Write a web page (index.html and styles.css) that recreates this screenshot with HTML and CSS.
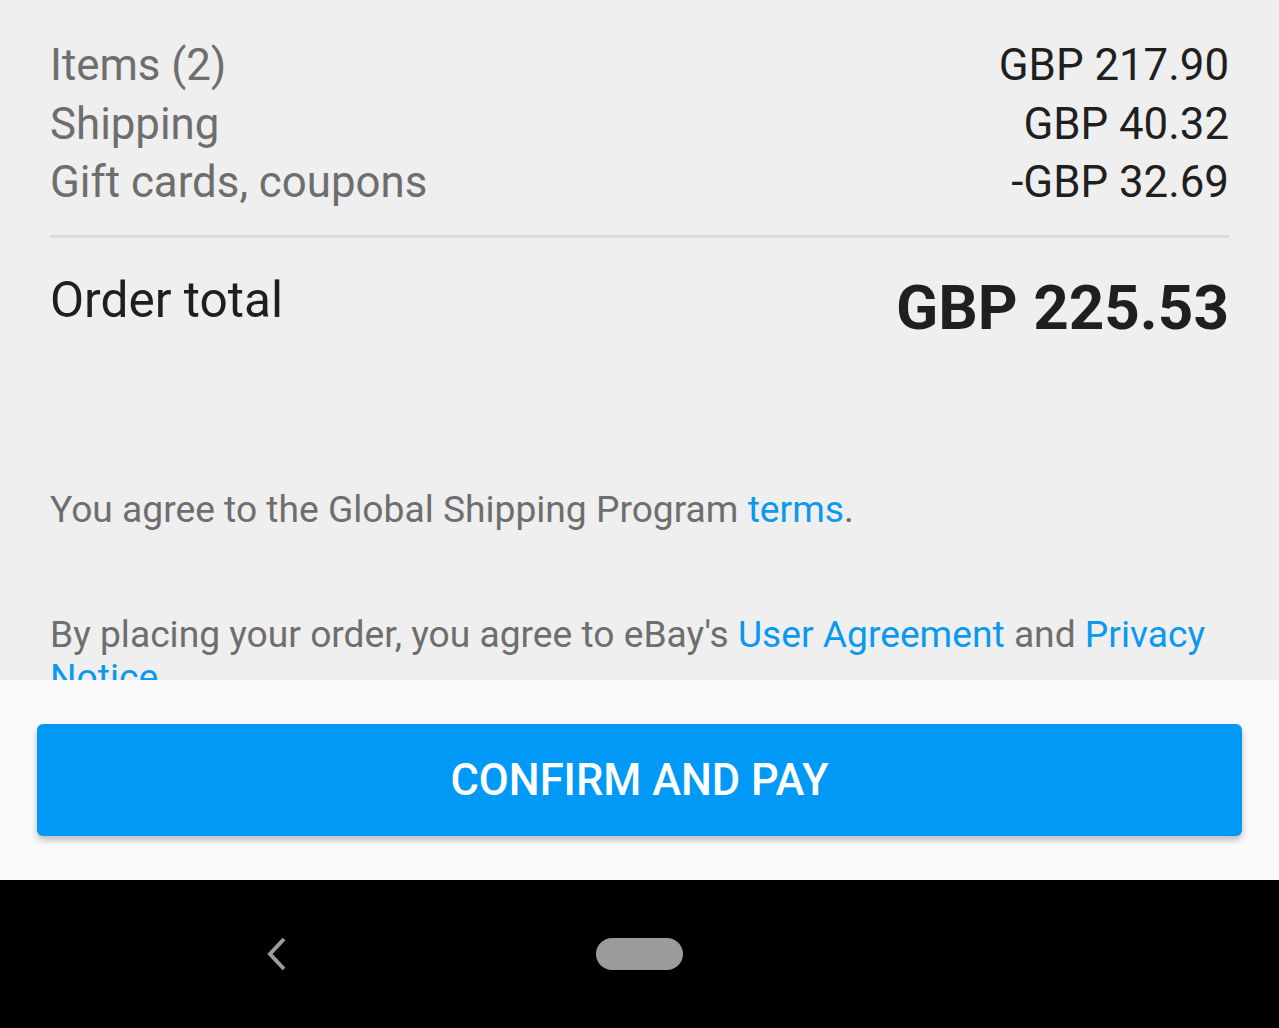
FILE: index.html
```html
<!DOCTYPE html>
<html lang="en">
<head>
    <meta charset="UTF-8">
    <meta name="viewport" content="width=device-width, initial-scale=1.0">
    <title>Review order</title>
    <link rel="stylesheet" href="styles.css">
</head>
<body>
    <div class="screen">
        <div class="content">
            <div class="summary">
                <div class="line">
                    <span class="label">Items (2)</span>
                    <span class="value">GBP 217.90</span>
                </div>
                <div class="line">
                    <span class="label">Shipping</span>
                    <span class="value">GBP 40.32</span>
                </div>
                <div class="line">
                    <span class="label">Gift cards, coupons</span>
                    <span class="value">-GBP 32.69</span>
                </div>
            </div>

            <div class="total">
                <span class="total-label">Order total</span>
                <span class="total-value">GBP 225.53</span>
            </div>

            <p class="legal gsp">You agree to the Global Shipping Program <a href="#">terms</a>.</p>
            <p class="legal agreement">By placing your order, you agree to eBay's <a href="#">User Agreement</a> and <a href="#">Privacy Notice</a>.</p>
        </div>

        <div class="footer">
            <button class="pay-button">CONFIRM AND PAY</button>
        </div>

        <div class="nav-bar">
            <svg class="nav-back" width="30" height="36" viewBox="0 0 30 36">
                <polyline points="22,3 8,18 22,33" fill="none" stroke="#9b9b9b" stroke-width="4"/>
            </svg>
            <div class="nav-home"></div>
        </div>
    </div>
</body>
</html>
```

FILE: styles.css
```css
:root {
    --page: #efefef;
    --label: #6e6e6e;
    --text: #1f1f1f;
    --link: #0a99ef;
    --primary: #0099f5;
    --divider: #dcdcdc;
}

html, body {
    margin: 0;
    padding: 0;
}

body {
    font-family: Roboto, "Noto Sans", Arial, sans-serif;
    background: #000;
}

.screen {
    display: flex;
    flex-direction: column;
    height: 1028px;
}

.content {
    flex: 1;
    overflow: hidden;
    background: var(--page);
    padding: 36px 50px 0 50px;
}

.summary {
    padding-bottom: 23px;
    border-bottom: 3px solid var(--divider);
}

.line {
    display: flex;
    justify-content: space-between;
    font-size: 43.8px;
    line-height: 58.5px;
}

.label {
    color: var(--label);
}

.value {
    color: var(--text);
}

.total {
    display: flex;
    justify-content: space-between;
    align-items: flex-start;
    padding-top: 32px;
}

.total-label {
    font-size: 49.6px;
    line-height: 60px;
    color: var(--text);
}

.total-value {
    font-size: 62px;
    font-weight: bold;
    line-height: 76px;
    color: var(--text);
}

.legal {
    margin: 0;
    font-size: 37.2px;
    line-height: 43px;
    color: var(--label);
}

.legal a {
    color: var(--link);
    text-decoration: none;
}

.gsp {
    margin-top: 142.5px;
}

.agreement {
    margin-top: 82px;
}

.footer {
    height: 200px;
    box-sizing: border-box;
    padding: 44px 37px;
    background: #fafafa;
}

.pay-button {
    display: block;
    width: 100%;
    height: 112px;
    border: none;
    border-radius: 6px;
    background: var(--primary);
    color: #fff;
    font-family: Roboto, Arial, sans-serif;
    font-size: 43.5px;
    font-weight: 500;
    box-shadow: 0 4px 6px rgba(0, 0, 0, 0.25);
    cursor: pointer;
}

.nav-bar {
    height: 148px;
    background: #000;
    position: relative;
}

.nav-back {
    position: absolute;
    left: 262px;
    top: 56px;
}

.nav-home {
    position: absolute;
    left: 596px;
    top: 58px;
    width: 87px;
    height: 32px;
    border-radius: 16px;
    background: #9b9b9b;
}
```
